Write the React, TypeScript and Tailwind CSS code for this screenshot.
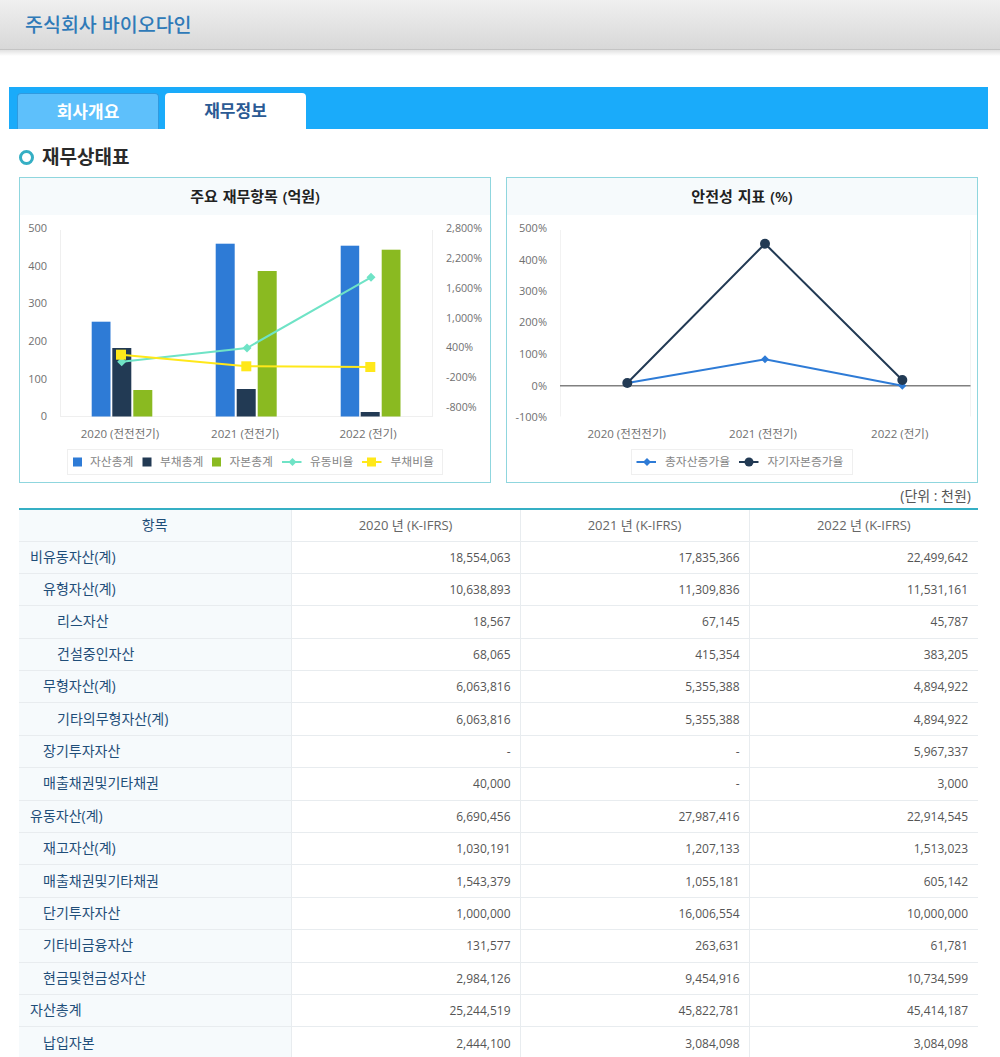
const FONT = "'Open Sans','Noto Sans CJK KR',sans-serif";
const GRAY = "#707070";

const rows: [string, number, string, string, string][] = [
  ["비유동자산(계)", 0, "18,554,063", "17,835,366", "22,499,642"],
  ["유형자산(계)", 1, "10,638,893", "11,309,836", "11,531,161"],
  ["리스자산", 2, "18,567", "67,145", "45,787"],
  ["건설중인자산", 2, "68,065", "415,354", "383,205"],
  ["무형자산(계)", 1, "6,063,816", "5,355,388", "4,894,922"],
  ["기타의무형자산(계)", 2, "6,063,816", "5,355,388", "4,894,922"],
  ["장기투자자산", 1, "-", "-", "5,967,337"],
  ["매출채권및기타채권", 1, "40,000", "-", "3,000"],
  ["유동자산(계)", 0, "6,690,456", "27,987,416", "22,914,545"],
  ["재고자산(계)", 1, "1,030,191", "1,207,133", "1,513,023"],
  ["매출채권및기타채권", 1, "1,543,379", "1,055,181", "605,142"],
  ["단기투자자산", 1, "1,000,000", "16,006,554", "10,000,000"],
  ["기타비금융자산", 1, "131,577", "263,631", "61,781"],
  ["현금및현금성자산", 1, "2,984,126", "9,454,916", "10,734,599"],
  ["자산총계", 0, "25,244,519", "45,822,781", "45,414,187"],
  ["납입자본", 1, "2,444,100", "3,084,098", "3,084,098"],
];

function T({ x, y, a = "start", c = GRAY, s = 11, children }: { x: number; y: number; a?: "start" | "middle" | "end"; c?: string; s?: number; children: React.ReactNode }) {
  return (
    <text x={x} y={y} textAnchor={a} fill={c} fontSize={s} dominantBaseline="central" fontFamily={FONT}>
      {children}
    </text>
  );
}

function Bars({ d, c }: { d: [number, number, number][]; c: string }) {
  return (
    <>
      {d.map(([x, w, top]) => (
        <rect key={x} x={x} y={top} width={w} height={416.5 - top} fill={c} />
      ))}
    </>
  );
}

function Diamond({ x, y, r, c }: { x: number; y: number; r: number; c: string }) {
  return <polygon points={`${x},${y - r} ${x + r},${y} ${x},${y + r} ${x - r},${y}`} fill={c} />;
}

function LeftChart() {
  const teal = "#6fe3c6";
  const yellow = "#ffe81a";
  return (
    <svg viewBox="20 215 470 267" width={470} height={267} className="block">
      <line x1={60.5} y1={230} x2={60.5} y2={416.5} stroke="#efefef" />
      <line x1={432.5} y1={230} x2={432.5} y2={416.5} stroke="#efefef" />
      <line x1={60} y1={416.5} x2={433} y2={416.5} stroke="#efefef" />
      {[["500", 227.5], ["400", 265], ["300", 302.5], ["200", 340], ["100", 378], ["0", 415.5]].map(([t, y]) => (
        <T key={t} x={47} y={y as number} a="end">{t}</T>
      ))}
      {[["2,800%", 228], ["2,200%", 258], ["1,600%", 288], ["1,000%", 317.5], ["400%", 347], ["-200%", 377], ["-800%", 406.5]].map(([t, y]) => (
        <T key={t} x={446} y={y as number} s={10.7}>{t}</T>
      ))}
      <Bars c="#2e7bd6" d={[[91.7, 18.8, 321.7], [215.7, 19, 243.7], [340.7, 18.5, 245.7]]} />
      <Bars c="#223a54" d={[[112.3, 19, 348], [236.7, 19, 389], [360.7, 19, 412]]} />
      <Bars c="#8aba21" d={[[133.3, 19, 390], [257.7, 19, 271], [381.7, 18.8, 249.7]]} />
      <polyline points="121.7,361.7 247,348 371,277.3" fill="none" stroke={teal} strokeWidth={2} />
      {[[121.7, 361.7], [247, 348], [371, 277.3]].map(([x, y]) => (
        <Diamond key={x} x={x} y={y} r={4.5} c={teal} />
      ))}
      <polyline points="121,354.7 246.3,366.3 370.3,367" fill="none" stroke={yellow} strokeWidth={2} />
      {[[121, 354.7], [246.3, 366.3], [370.3, 367]].map(([x, y]) => (
        <rect key={x} x={x - 5} y={y - 5} width={10} height={10} fill={yellow} />
      ))}
      <T x={120} y={433} a="middle" s={11.5}>2020 (전전전기)</T>
      <T x={245} y={433} a="middle" s={11.5}>2021 (전전기)</T>
      <T x={368} y={433} a="middle" s={11.5}>2022 (전기)</T>
      <rect x={67.5} y={449.5} width={375} height={25} fill="#fff" stroke="#efefef" />
      <rect x={73} y={457.5} width={9} height={9} fill="#2e7bd6" />
      <T x={90} y={461} s={11.8} c="#858585">자산총계</T>
      <rect x={142.5} y={457.5} width={9} height={9} fill="#223a54" />
      <T x={160} y={461} s={11.8} c="#858585">부채총계</T>
      <rect x={212} y={457.5} width={9} height={9} fill="#8aba21" />
      <T x={229.5} y={461} s={11.8} c="#858585">자본총계</T>
      <line x1={282} y1={462} x2={301.5} y2={462} stroke={teal} strokeWidth={2} />
      <Diamond x={292.5} y={462} r={4} c={teal} />
      <T x={310} y={461} s={11.8} c="#858585">유동비율</T>
      <line x1={362} y1={462} x2={381.5} y2={462} stroke={yellow} strokeWidth={2} />
      <rect x={367} y={457.5} width={9} height={9} fill={yellow} />
      <T x={390.5} y={461} s={11.8} c="#858585">부채비율</T>
    </svg>
  );
}

function RightChart() {
  const blue = "#2e7bd6";
  const navy = "#223a54";
  return (
    <svg viewBox="507 215 470 267" width={470} height={267} className="block">
      <line x1={560.5} y1={230} x2={560.5} y2={416.5} stroke="#f2f2f2" />
      <line x1={970.5} y1={230} x2={970.5} y2={416.5} stroke="#f2f2f2" />
      {[["500%", 227.5], ["400%", 259], ["300%", 290.5], ["200%", 321.5], ["100%", 353], ["0%", 385], ["-100%", 416]].map(([t, y]) => (
        <T key={t} x={547} y={y as number} a="end">{t}</T>
      ))}
      <line x1={560} y1={385.7} x2={970.5} y2={385.7} stroke="#808080" strokeWidth={1.5} />
      <polyline points="627.3,383 765,359.3 902.3,385.7" fill="none" stroke={blue} strokeWidth={2} />
      {[[627.3, 383], [765, 359.3], [902.3, 385.7]].map(([x, y]) => (
        <Diamond key={x} x={x} y={y} r={4} c={blue} />
      ))}
      <polyline points="627.3,383 765,243.7 902.3,380" fill="none" stroke={navy} strokeWidth={2} />
      {[[627.3, 383], [765, 243.7], [902.3, 380]].map(([x, y]) => (
        <circle key={x} cx={x} cy={y} r={5} fill={navy} />
      ))}
      <T x={626.7} y={433} a="middle" s={11.5}>2020 (전전전기)</T>
      <T x={763} y={433} a="middle" s={11.5}>2021 (전전기)</T>
      <T x={899.7} y={433} a="middle" s={11.5}>2022 (전기)</T>
      <rect x={631.5} y={449.5} width={221} height={25} fill="#fff" stroke="#efefef" />
      <line x1={636.5} y1={462} x2={656} y2={462} stroke={blue} strokeWidth={2} />
      <Diamond x={647} y={462} r={4} c={blue} />
      <T x={665} y={461} s={11.8} c="#858585">총자산증가율</T>
      <line x1={739} y1={462} x2={758.5} y2={462} stroke={navy} strokeWidth={2} />
      <circle cx={749} cy={462} r={4.5} fill={navy} />
      <T x={767.5} y={461} s={11.8} c="#858585">자기자본증가율</T>
    </svg>
  );
}

function ChartCard({ title, children }: { title: string; children: React.ReactNode }) {
  return (
    <div className="w-[472px] h-[306px] border border-[#8fd6de] bg-white">
      <div className="h-[37px] pb-px bg-[#f6fafc] flex items-center justify-center text-[15px] [word-spacing:1px] font-semibold text-[#222]">{title}</div>
      {children}
    </div>
  );
}

export default function App() {
  return (
    <div className="h-[1057px] overflow-hidden bg-white" style={{ fontFamily: FONT }}>
      <header className="h-[50px] bg-gradient-to-b from-[#f0f0f0] to-[#d8d8d8] border-b border-[#c4c4c4] pl-[25px] flex items-center">
        <h1 className="text-[19.5px] font-medium text-[#2f7ab8]">주식회사 바이오다인</h1>
      </header>
      <div className="h-[6px] bg-gradient-to-b from-[#e2e2e2] to-white" />
      <nav className="mt-[31px] mx-[9px] w-[979px] h-[42px] bg-[#1aabfa] flex items-end gap-[6px] pl-[8px]">
        <div className="w-[142px] h-[36px] rounded-t-[4px] bg-[#5ec0fb] border border-b-0 border-[#2f9ae0] flex items-center justify-center text-[17px] font-semibold text-white">회사개요</div>
        <div className="w-[141px] h-[36px] rounded-t-[4px] bg-white flex items-center justify-center text-[17px] font-semibold text-[#2b5a94]">재무정보</div>
      </nav>
      <div className="px-[19px] w-[978px] box-content">
        <div className="h-[48px] pt-[9px] flex items-center gap-[7px] pl-px">
          <span className="size-[15px] -ml-px rounded-full border-[3px] border-[#35afc4]" />
          <h2 className="text-[19px] font-bold text-[#2a2a2a] ml-px">재무상태표</h2>
        </div>
        <div className="w-[959px] flex justify-between">
          <ChartCard title="주요 재무항목 (억원)"><LeftChart /></ChartCard>
          <ChartCard title="안전성 지표 (%)"><RightChart /></ChartCard>
        </div>
        <div className="w-[959px] h-[25px] flex items-center justify-end pr-[7px] text-[14px] text-[#555]">(단위 : 천원)</div>
        <table className="w-[959px] table-fixed border-collapse border-t-2 border-[#35afc4] text-[14px]">
          <colgroup>
            <col className="w-[272px]" />
            <col className="w-[229px]" />
            <col className="w-[229px]" />
            <col className="w-[229px]" />
          </colgroup>
          <thead>
            <tr className="h-[32px] border-b border-[#e8ecef]">
              <th className="bg-[#f6fafc] pb-px font-normal text-[#1f4e79]">항목</th>
              {["2020 년 (K-IFRS)", "2021 년 (K-IFRS)", "2022 년 (K-IFRS)"].map((t) => (
                <th key={t} className="border-l border-[#e8ecef] font-normal text-[13px] text-[#666]">{t}</th>
              ))}
            </tr>
          </thead>
          <tbody>
            {rows.map(([name, level, a, b, c], i) => (
              <tr key={i} className="h-[32.4px] border-b border-[#e8ecef]">
                <td className={`bg-[#f6fafc] pb-[2px] text-[#1f4e79] ${level === 0 ? "pl-[11px]" : level === 1 ? "pl-[24px]" : "pl-[38px]"}`}>{name}</td>
                {[a, b, c].map((v, j) => (
                  <td key={j} className={`border-l border-[#e8ecef] text-right pt-px text-[12px] text-[#555] ${j === 2 ? "pr-[10px]" : "pr-[9px]"}`}>{v}</td>
                ))}
              </tr>
            ))}
          </tbody>
        </table>
      </div>
    </div>
  );
}
